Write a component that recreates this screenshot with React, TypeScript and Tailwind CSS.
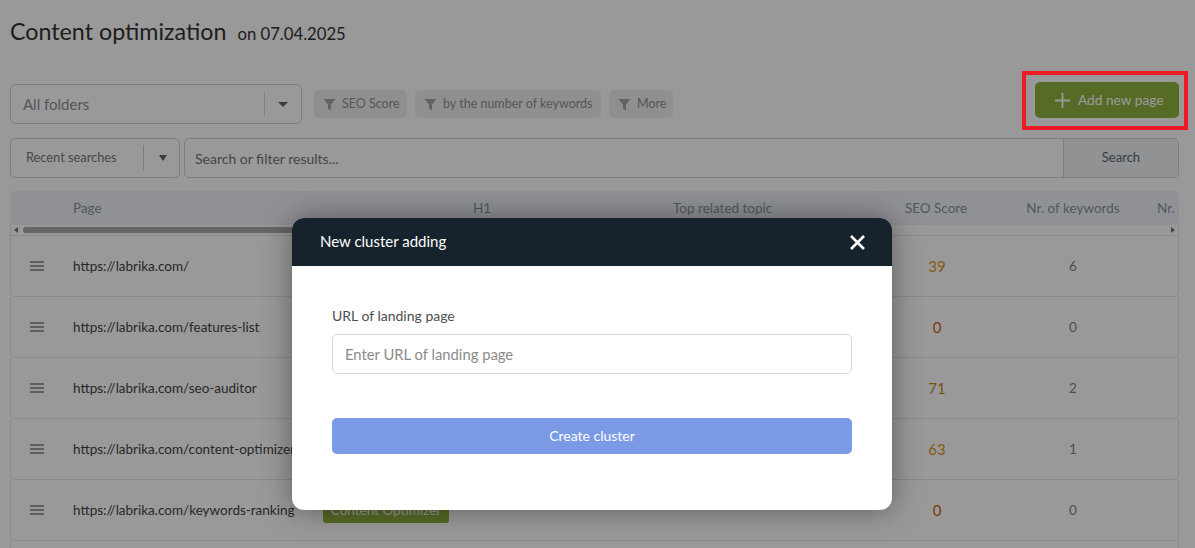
const font = 'font-["Lato","Noto_Sans",sans-serif]'

const rows = [
  { url: 'https://labrika.com/', score: '39', scoreColor: 'text-[#dd941f]', keywords: '6', badge: false },
  { url: 'https://labrika.com/features-list', score: '0', scoreColor: 'text-[#d2620f]', keywords: '0', badge: false },
  { url: 'https://labrika.com/seo-auditor', score: '71', scoreColor: 'text-[#c9861c]', keywords: '2', badge: false },
  { url: 'https://labrika.com/content-optimizer', score: '63', scoreColor: 'text-[#dd941f]', keywords: '1', badge: false },
  { url: 'https://labrika.com/keywords-ranking', score: '0', scoreColor: 'text-[#d2620f]', keywords: '0', badge: true },
]

function FilterIcon() {
  return (
    <svg width="13" height="13" viewBox="0 0 13 13" className="shrink-0">
      <path d="M0.5 1h12L8 6.5v6L5 10.6V6.5z" fill="#a3a3a3" />
    </svg>
  )
}

function Chip({ label, width }: { label: string; width: string }) {
  return (
    <div className={`flex h-[28px] items-center gap-[6px] rounded-[5px] bg-[#efefef] pl-[9px] text-[12.5px] whitespace-nowrap text-[#8a8f98] ${width}`}>
      <FilterIcon />
      <span className="pt-[1px]">{label}</span>
    </div>
  )
}

function Caret({ size }: { size: string }) {
  return <div className={`${size} border-x-transparent border-t-[#666]`} />
}

function Burger() {
  return (
    <svg width="14" height="10" viewBox="0 0 14 10" className="ml-[19px] shrink-0" stroke="#808080" strokeWidth="1.3">
      <path d="M0 1h14M0 5h14M0 9h14" />
    </svg>
  )
}

function Row({ url, score, scoreColor, keywords, badge }: (typeof rows)[number]) {
  return (
    <div className="flex h-[61px] shrink-0 items-center rounded-b-[5px] border border-t-0 border-[#e4e4ee] text-[13.5px]">
      <Burger />
      <div className="relative ml-[29px] h-full w-[400px] shrink-0">
        <span className="flex h-full items-center whitespace-nowrap text-[#444]">{url}</span>
        {badge && (
          <div className="absolute left-[250px] top-[17px] flex h-[26px] w-[126px] items-center justify-center rounded-[3px] bg-[#8fb23f] text-white">
            Content Optimizer
          </div>
        )}
      </div>
      <div className="w-[394px] shrink-0" />
      <div className={`w-[140px] shrink-0 text-center text-[15px] ${scoreColor}`}>{score}</div>
      <div className="w-[132px] shrink-0 text-center text-[#7b8494]">{keywords}</div>
    </div>
  )
}

export default function App() {
  return (
    <div className={`relative h-screen overflow-hidden bg-white pl-[10px] pr-[16px] ${font}`}>
      <div className="flex items-baseline gap-[11px] pt-[16px] text-[#333]">
        <h1 className="text-[23.25px] leading-[30px]">Content optimization</h1>
        <span className="text-[16.7px]">on 07.04.2025</span>
      </div>

      <div className="mt-[37px] flex items-center">
        <div className="flex h-[40px] w-[292px] items-center rounded-[5px] border border-[#cfcfdb] pl-[12px] text-[#8a8f98]">
          <span className="flex-1 text-[15px]">All folders</span>
          <div className="h-[24px] w-px bg-[#d8d8e0]" />
          <div className="flex w-[36px] justify-center">
            <Caret size="border-x-[5px] border-t-[5px]" />
          </div>
        </div>
        <div className="ml-[12px] flex gap-[8px]">
          <Chip label="SEO Score" width="w-[93px]" />
          <Chip label="by the number of keywords" width="w-[186px]" />
          <Chip label="More" width="w-[64px]" />
        </div>
        <button className="ml-auto -mt-[2px] flex h-[36px] w-[144px] items-center gap-[8px] self-start rounded-[5px] bg-[#8fb23f] pl-[20px] text-[13.7px] text-white">
          <svg width="15" height="15" viewBox="0 0 15 15" stroke="currentColor" strokeWidth="1.8" className="shrink-0">
            <path d="M7.5 0v15M0 7.5h15" />
          </svg>
          Add new page
        </button>
      </div>

      <div className="mt-[14px] flex gap-[4px]">
        <div className="flex h-[40px] w-[170px] items-center rounded-[5px] border border-[#cfcfdb] pl-[15px] text-[12.8px] text-[#77787f]">
          <span className="flex-1 whitespace-nowrap">Recent searches</span>
          <div className="h-[26px] w-px bg-[#d0d0da]" />
          <div className="flex w-[35px] justify-center pl-[3px]">
            <Caret size="border-x-[4px] border-t-[6px]" />
          </div>
        </div>
        <div className="flex h-[40px] flex-1 overflow-hidden rounded-[5px] border border-[#cfcfdb]">
          <div className="flex flex-1 items-center pl-[10px] text-[14px] text-[#777]">Search or filter results...</div>
          <div className="flex w-[115px] items-center justify-center border-l border-[#cfcfdb] bg-[#f1f3f7] text-[13px] text-[#60646e]">
            Search
          </div>
        </div>
      </div>

      <div className="mt-[13px] flex h-[357px] flex-col">
        <div className="h-[34px] shrink-0 overflow-hidden rounded-t-[5px] bg-[#eef2f8] text-[13.5px] text-[#8a93a3]">
          <div className="flex h-full items-center whitespace-nowrap">
            <span className="ml-[63px] w-[400px] shrink-0">Page</span>
            <span className="w-[200px] shrink-0">H1</span>
            <span className="w-[193px] shrink-0">Top related topic</span>
            <span className="w-[140px] shrink-0 text-center">SEO Score</span>
            <span className="w-[134px] shrink-0 text-center">Nr. of keywords</span>
            <span className="ml-[17px] shrink-0">Nr. of</span>
          </div>
        </div>
        <div className="flex h-[11px] shrink-0 items-center border-x border-b border-[#e4e4ee] bg-white px-[3px]">
          <div className="mr-[5px] h-0 w-0 border-y-[3px] border-r-[4px] border-y-transparent border-r-[#777]" />
          <div className="h-[6px] w-[320px] rounded-full bg-[#aaa]" />
          <div className="ml-auto h-0 w-0 border-y-[3px] border-l-[4px] border-y-transparent border-l-[#777]" />
        </div>
        {rows.map((row) => (
          <Row key={row.url} {...row} />
        ))}
        <div className="h-[20px] shrink-0 border-x border-[#e4e4ee]" />
      </div>

      <div className="absolute inset-0 z-10 bg-black/40" />

      <div className="absolute left-[1022px] top-[71px] z-20 h-[59px] w-[166px] border-[4px] border-[#ed1c24]" />

      <div className="absolute left-[292px] top-[218px] z-30 h-[292px] w-[600px] overflow-hidden rounded-[12px] bg-white shadow-[0_0_30px_rgba(0,0,0,0.4)]">
        <div className="flex h-[48px] items-center justify-between bg-[#16232d] pl-[28px] pr-[27px] text-white">
          <span className="-mt-[1px] text-[15px]">New cluster adding</span>
          <svg width="15" height="15" viewBox="0 0 15 15" stroke="currentColor" strokeWidth="2.6" className="shrink-0">
            <path d="M1 1l13 13M14 1L1 14" />
          </svg>
        </div>
        <div className="px-[40px] pt-[41px]">
          <label className="block text-[14px] leading-[18px] text-[#4d4d4d]">URL of landing page</label>
          <input
            className="mt-[9px] h-[40px] w-full rounded-[5px] border border-[#d7d7e2] px-[12px] text-[14.8px] placeholder:text-[#8a8a8a]"
            placeholder="Enter URL of landing page"
          />
          <button className="mt-[44px] h-[36px] w-full rounded-[5px] bg-[#7b9ae6] pb-[1px] text-[14px] text-white">
            Create cluster
          </button>
        </div>
      </div>
    </div>
  )
}
